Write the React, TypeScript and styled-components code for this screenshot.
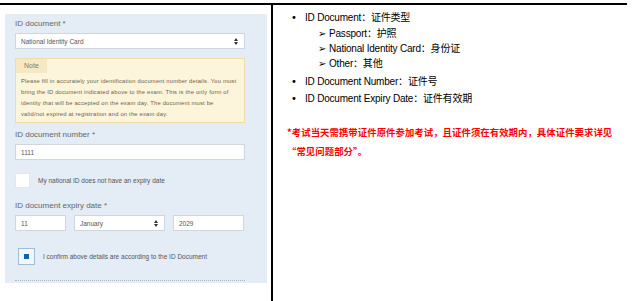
import styled, { createGlobalStyle } from "styled-components";

const GlobalStyle = createGlobalStyle`
  html, body {
    margin: 0;
    padding: 0;
    background: #ffffff;
  }
  body {
    font-family: "Liberation Sans", Arial, "Noto Sans CJK SC", sans-serif;
    overflow: hidden;
  }
`;

const Page = styled.div`
  width: 627px;
  height: 297px;
  margin-top: 3px;
  border-top: 2px solid #000;
  display: grid;
  grid-template-columns: 271px 1fr;
`;

const LeftCell = styled.div`
  padding: 9px 4px 0 5px;
`;

const RightCell = styled.div`
  border-left: 2px solid #000;
  padding: 5px 0 0 14px;
  font-family: "Liberation Sans", Arial, "Noto Sans CJK SC", sans-serif;
  color: #000;
`;

const Panel = styled.div`
  background: #e4ecf5;
  height: 269px;
  box-sizing: border-box;
  padding: 5px 22px 0 10px;
  display: flex;
  flex-direction: column;
`;

const Label = styled.div<{ $gap?: number }>`
  font-size: 8px;
  line-height: 10px;
  color: #666;
  margin-top: ${(p) => p.$gap ?? 0}px;
  margin-bottom: 4px;
`;

const Field = styled.div<{ $width?: number }>`
  height: 16px;
  box-sizing: border-box;
  width: ${(p) => (p.$width ? `${p.$width}px` : "100%")};
  background: #fff;
  border: 1px solid #cfd6de;
  font-size: 6.5px;
  color: #555;
  display: flex;
  align-items: center;
  justify-content: space-between;
  padding: 0 6px 0 5px;
`;

const SelectArrows = styled.span`
  display: flex;
  flex-direction: column;
  align-items: center;
  gap: 1px;
  &::before,
  &::after {
    content: "";
    border-left: 2px solid transparent;
    border-right: 2px solid transparent;
  }
  &::before {
    border-bottom: 3px solid #333;
  }
  &::after {
    border-top: 3px solid #333;
  }
`;

const Note = styled.div`
  margin-top: 9px;
  background: #fcf5dc;
  border: 1px solid #efdca8;
  height: 65px;
  box-sizing: border-box;
`;

const NoteTab = styled.div`
  width: fit-content;
  background: #f6e8c3;
  color: #8a7a5a;
  font-size: 7px;
  line-height: 14px;
  padding: 0 8px;
`;

const NoteText = styled.p`
  margin: 3px 0 0 5px;
  font-size: 5.8px;
  line-height: 11px;
  letter-spacing: 0.2px;
  color: #6f604a;
  white-space: nowrap;
`;

const CheckRow = styled.div<{ $gap: number }>`
  display: flex;
  align-items: center;
  gap: 8px;
  margin-top: ${(p) => p.$gap}px;
  font-size: 6.5px;
  color: #555;
`;

const CheckBox = styled.span<{ $checked?: boolean }>`
  width: ${(p) => (p.$checked ? 17 : 15)}px;
  height: ${(p) => (p.$checked ? 17 : 15)}px;
  box-sizing: border-box;
  margin-left: ${(p) => (p.$checked ? 3 : 0)}px;
  background: ${(p) => (p.$checked ? "#f3f7fc" : "#fff")};
  border: 1px solid ${(p) => (p.$checked ? "#9dbde0" : "#e2e7ed")};
  display: flex;
  align-items: center;
  justify-content: center;
  &::after {
    content: "";
    width: 5px;
    height: 5px;
    background: ${(p) => (p.$checked ? "#1561b8" : "transparent")};
  }
`;

const DateRow = styled.div`
  display: flex;
  gap: 8px;
`;

const Dotted = styled.div`
  margin-top: 15px;
  border-top: 1px dotted #a9b4c0;
`;

const List = styled.ul`
  list-style: none;
  margin: 0;
  padding: 0;
`;

const Item = styled.li<{ $sub?: boolean; $gap?: number }>`
  display: flex;
  align-items: center;
  font-size: 10px;
  line-height: ${(p) => (p.$sub ? 15 : 16)}px;
  margin-top: ${(p) => p.$gap ?? 0}px;
  padding-left: ${(p) => (p.$sub ? 31 : 4)}px;
  letter-spacing: -0.2px;
`;

const Marker = styled.span<{ $sub?: boolean }>`
  width: ${(p) => (p.$sub ? 11 : 14)}px;
  font-size: 10px;
  font-family: "DejaVu Sans", sans-serif;
  flex-shrink: 0;
`;

const Warning = styled.p`
  margin: 16px 0 0 0;
  color: #ff0000;
  font-family: "Noto Sans CJK SC", sans-serif;
  font-weight: 700;
  font-size: 9.4px;
  line-height: 19px;
  letter-spacing: 0.05px;
`;

const docItems = [
  { label: "Passport", zh: "护照" },
  { label: "National Identity Card", zh: "身份证" },
  { label: "Other", zh: "其他" },
];

export default function App() {
  return (
    <>
      <GlobalStyle />
      <Page>
        <LeftCell>
          <Panel>
            <Label>ID document *</Label>
            <Field>
              National Identity Card
              <SelectArrows />
            </Field>
            <Note>
              <NoteTab>Note</NoteTab>
              <NoteText>
                Please fill in accurately your identification document number details. You must
                <br />
                bring the ID document indicated above to the exam. This is the only form of
                <br />
                identity that will be accepted on the exam day. The document must be
                <br />
                valid/not expired at registration and on the exam day.
              </NoteText>
            </Note>
            <Label $gap={7}>ID document number *</Label>
            <Field>1111</Field>
            <CheckRow $gap={13}>
              <CheckBox />
              My national ID does not have an expiry date
            </CheckRow>
            <Label $gap={13}>ID document expiry date *</Label>
            <DateRow>
              <Field $width={51}>11</Field>
              <Field $width={91}>
                January
                <SelectArrows />
              </Field>
              <Field $width={71}>2029</Field>
            </DateRow>
            <CheckRow $gap={17}>
              <CheckBox $checked />
              I confirm above details are according to the ID Document
            </CheckRow>
            <Dotted />
          </Panel>
        </LeftCell>
        <RightCell>
          <List>
            <Item>
              <Marker>•</Marker>ID Document：证件类型
            </Item>
            {docItems.map((d) => (
              <Item key={d.label} $sub>
                <Marker $sub>➢</Marker>
                {d.label}：{d.zh}
              </Item>
            ))}
            <Item $gap={3}>
              <Marker>•</Marker>ID Document Number：证件号
            </Item>
            <Item $gap={1}>
              <Marker>•</Marker>ID Document Expiry Date：证件有效期
            </Item>
          </List>
          <Warning>
            *考试当天需携带证件原件参加考试，且证件须在有效期内，具体证件要求详见
            <br />
            “常见问题部分”。
          </Warning>
        </RightCell>
      </Page>
    </>
  );
}
